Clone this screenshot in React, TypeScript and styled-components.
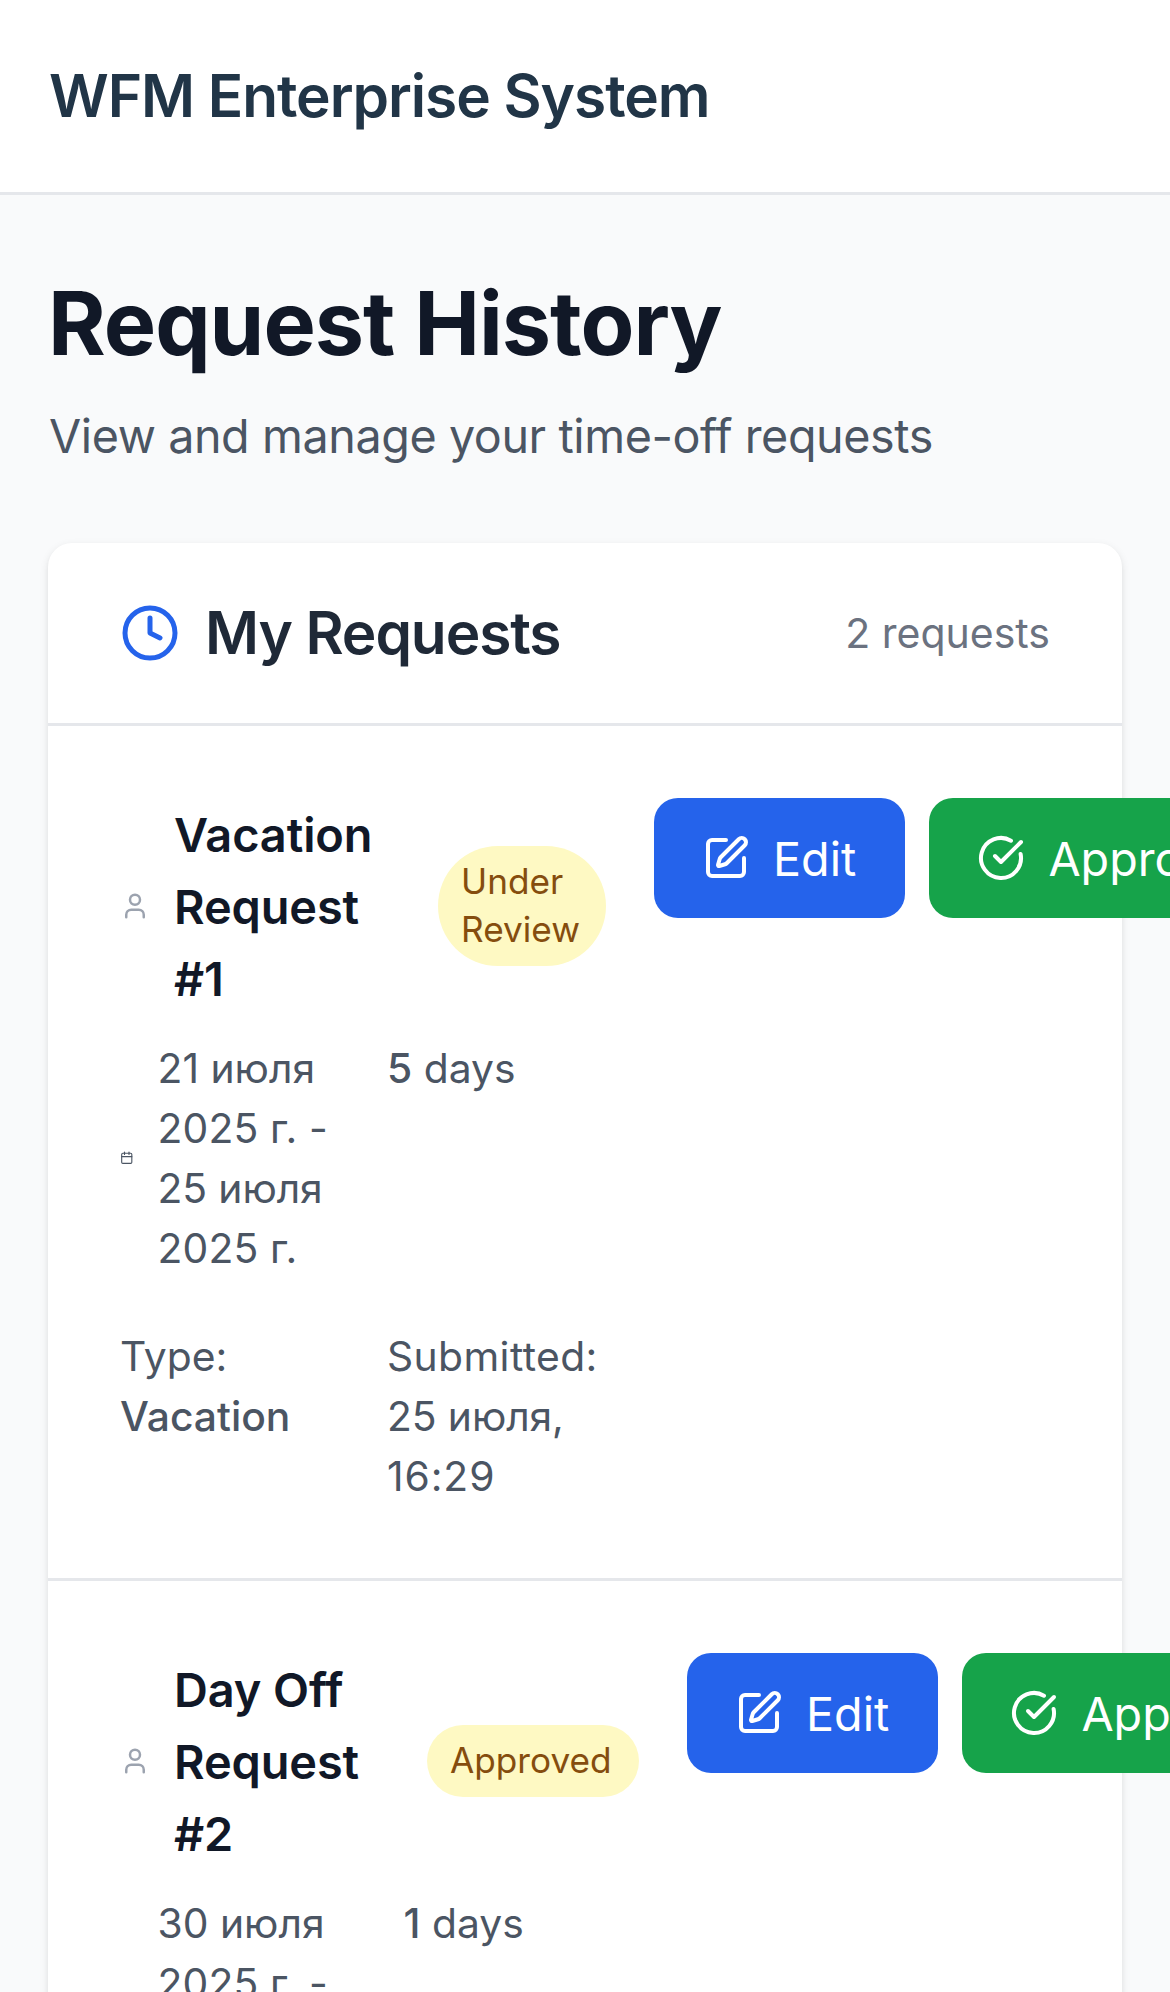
import React from 'react';
import styled, { createGlobalStyle } from 'styled-components';
import { Calendar, CircleCheckBig, Clock, SquarePen, User } from 'lucide-react';

const GlobalStyle = createGlobalStyle`
  *, *::before, *::after { box-sizing: border-box; }
  html, body { margin: 0; padding: 0; }
  body {
    background: #f9fafb;
    color: #111827;
    font-family: Inter, 'Liberation Sans', sans-serif;
    overflow: hidden;
    -webkit-font-smoothing: antialiased;
  }
  h1, h2, h3, p { margin: 0; }
  svg { display: block; }
`;

const Page = styled.div`
  height: 1992px;
  overflow: hidden;
  background: #f9fafb;
`;

const TopBar = styled.header`
  height: 195px;
  padding: 0 49px;
  display: flex;
  align-items: center;
  background: #fff;
  border-bottom: 3px solid #e5e7eb;
`;

const Brand = styled.h1`
  font-size: 58.6px;
  line-height: 84px;
  font-weight: 600;
  letter-spacing: -1.05px;
  color: #213547;
`;

const Main = styled.main`
  padding: 74px 48px 72px;
`;

const PageTitle = styled.h2`
  font-size: 88px;
  line-height: 108px;
  font-weight: 700;
  letter-spacing: -1px;
`;

const Subtitle = styled.p`
  margin: 23px 0 0 1px;
  font-size: 46.7px;
  line-height: 72px;
  letter-spacing: -0.42px;
  color: #4b5563;
`;

const Card = styled.section`
  margin-top: 71px;
  background: #fff;
  border-radius: 24px;
  box-shadow: 0 3px 9px 0 rgba(0, 0, 0, 0.1), 0 3px 6px -3px rgba(0, 0, 0, 0.1);
`;

const CardHeader = styled.div`
  display: flex;
  align-items: center;
  justify-content: space-between;
  padding: 48px 72px;
  border-bottom: 3px solid #e5e7eb;
`;

const CardTitle = styled.h2`
  display: flex;
  align-items: center;
  gap: 25px;
  font-size: 58.6px;
  line-height: 84px;
  font-weight: 600;
  letter-spacing: -1.1px;
  color: #1f2937;
  svg { color: #2563eb; }
`;

const Count = styled.span`
  font-size: 41px;
  line-height: 60px;
  color: #6b7280;
`;

const RequestRow = styled.article`
  display: flex;
  align-items: flex-start;
  padding: 72px;
  & + & { border-top: 3px solid #e5e7eb; }
`;

const Info = styled.div<{ $width: number }>`
  flex: none;
  width: ${(p) => p.$width}px;
`;

const Heading = styled.div`
  display: flex;
  align-items: center;
  justify-content: space-between;
`;

const TitleGroup = styled.div`
  display: flex;
  align-items: center;
  gap: 24px;
  svg { color: #9ca3af; flex: none; }
`;

const RequestTitle = styled.h3`
  width: 202px;
  margin: 1px 0 -1px;
  font-size: 46.9px;
  line-height: 72px;
  font-weight: 600;
  letter-spacing: -0.1px;
`;

const Badge = styled.span<{ $width: number }>`
  flex: none;
  width: ${(p) => p.$width}px;
  padding: 11px 23px 13px;
  border-radius: 60px;
  background: #fef9c3;
  color: #854d0e;
  font-size: 35.2px;
  line-height: 48px;
`;

const Details = styled.div`
  display: grid;
  grid-template-columns: 1fr 1fr;
  gap: 48px;
  margin-top: 24px;
  font-size: 40.8px;
  line-height: 60px;
  color: #4b5563;
  strong { font-weight: 500; }
`;

const Period = styled.div`
  display: flex;
  align-items: center;
  gap: 24px;
  svg { flex: none; }
`;

const Line = styled.span<{ $tracking?: number }>`
  display: block;
  white-space: nowrap;
  letter-spacing: ${(p) => (p.$tracking === undefined ? 'inherit' : `${p.$tracking}px`)};
`;

const Actions = styled.div`
  flex: none;
  display: flex;
  gap: 24px;
  margin-left: 48px;
`;

const ActionButton = styled.button<{ $tone: string; $width: number }>`
  flex: none;
  display: flex;
  align-items: center;
  gap: 23px;
  width: ${(p) => p.$width}px;
  height: 120px;
  padding: 0 48px;
  border: 0;
  border-radius: 24px;
  background: ${(p) => p.$tone};
  color: #fff;
  font-family: inherit;
  font-size: 46.7px;
  line-height: 72px;
  white-space: nowrap;
  svg { flex: none; }
`;

const ButtonLabel = styled.span`
  margin-top: 2px;
`;

interface TextLine {
  text: string;
  tracking?: number;
}

interface RequestData {
  id: number;
  title: string[];
  status: string;
  period: TextLine[];
  days: number;
  type: string;
  submitted: TextLine[];
  infoWidth: number;
  badgeWidth: number;
}

const submitted: TextLine[] = [
  { text: 'Submitted:', tracking: 0.4 },
  { text: '25 июля,', tracking: -0.1 },
  { text: '16:29', tracking: 0.9 },
];

const requests: RequestData[] = [
  {
    id: 1,
    title: ['Vacation', 'Request', '#1'],
    status: 'Under Review',
    period: [
      { text: '21 июля' },
      { text: '2025 г. -', tracking: 0.15 },
      { text: '25 июля', tracking: -0.1 },
      { text: '2025 г.', tracking: 0.15 },
    ],
    days: 5,
    type: 'Vacation',
    submitted,
    infoWidth: 486,
    badgeWidth: 168,
  },
  {
    id: 2,
    title: ['Day Off', 'Request', '#2'],
    status: 'Approved',
    period: [
      { text: '30 июля' },
      { text: '2025 г. -', tracking: 0.15 },
      { text: '30 июля' },
      { text: '2025 г.', tracking: 0.15 },
    ],
    days: 1,
    type: 'Day Off',
    submitted,
    infoWidth: 519,
    badgeWidth: 212,
  },
];

function Lines({ items }: { items: TextLine[] }) {
  return (
    <div>
      {items.map((item, i) => (
        <Line key={i} $tracking={item.tracking}>{item.text}</Line>
      ))}
    </div>
  );
}

function Request({ data }: { data: RequestData }) {
  return (
    <RequestRow>
      <Info $width={data.infoWidth}>
        <Heading>
          <TitleGroup>
            <User size={30} />
            <RequestTitle>
              {data.title.map((t) => <Line key={t}>{t}</Line>)}
            </RequestTitle>
          </TitleGroup>
          <Badge $width={data.badgeWidth}>{data.status}</Badge>
        </Heading>
        <Details>
          <Period>
            <Calendar size={13.5} />
            <Lines items={data.period} />
          </Period>
          <div><strong>{data.days}</strong> days</div>
          <div>
            <Line>Type:</Line>
            <strong>{data.type}</strong>
          </div>
          <Lines items={data.submitted} />
        </Details>
      </Info>
      <Actions>
        <ActionButton $tone="#2563eb" $width={251.4}>
          <SquarePen size={48} />
          <ButtonLabel>Edit</ButtonLabel>
        </ActionButton>
        <ActionButton $tone="#16a34a" $width={352}>
          <CircleCheckBig size={48} />
          <ButtonLabel>Approve</ButtonLabel>
        </ActionButton>
      </Actions>
    </RequestRow>
  );
}

export default function App() {
  return (
    <Page>
      <GlobalStyle />
      <TopBar>
        <Brand>WFM Enterprise System</Brand>
      </TopBar>
      <Main>
        <PageTitle>Request History</PageTitle>
        <Subtitle>View and manage your time-off requests</Subtitle>
        <Card>
          <CardHeader>
            <CardTitle>
              <Clock size={60} />
              My Requests
            </CardTitle>
            <Count>2 requests</Count>
          </CardHeader>
          {requests.map((r) => <Request key={r.id} data={r} />)}
        </Card>
      </Main>
    </Page>
  );
}
